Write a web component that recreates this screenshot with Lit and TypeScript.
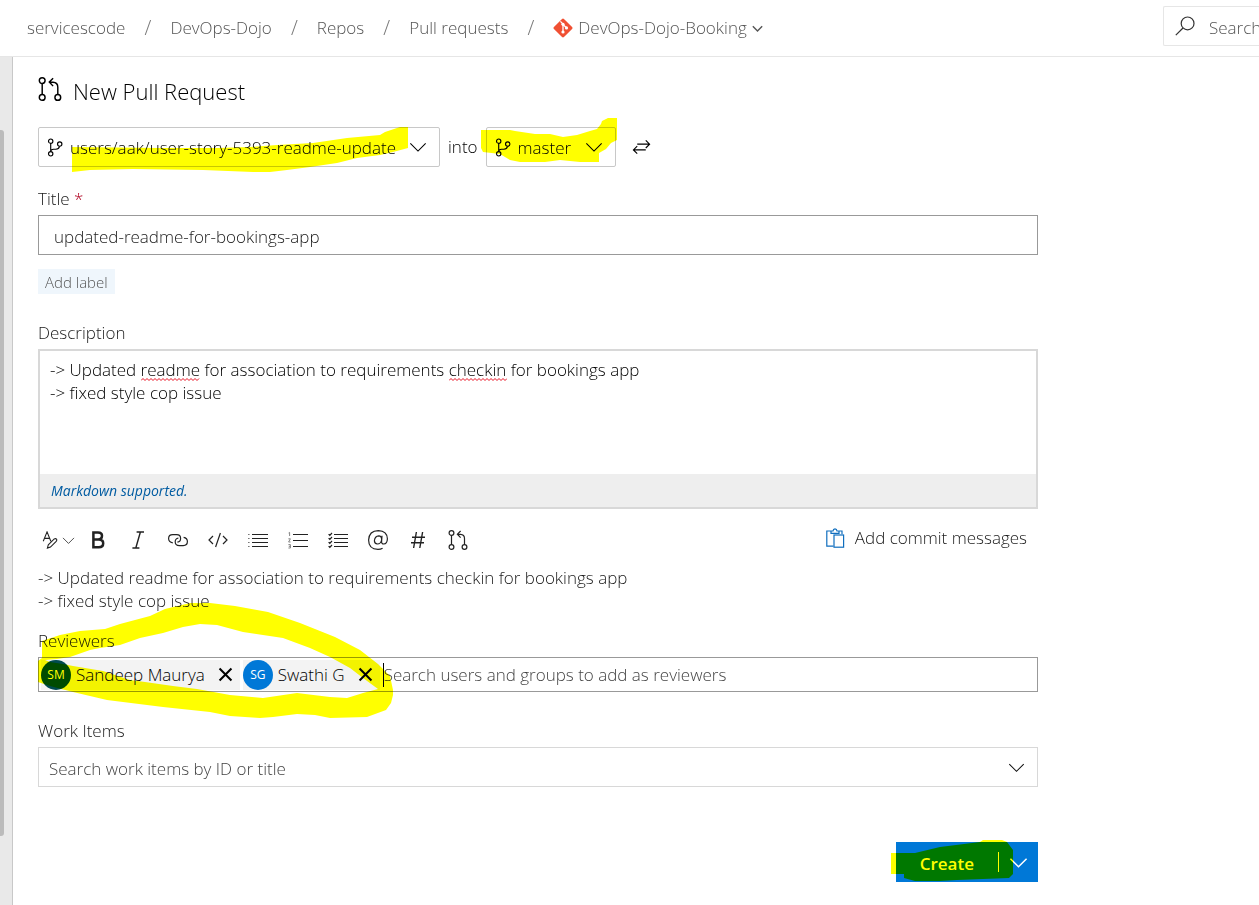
import { LitElement, html, css, svg } from "lit";
import { customElement, property, state, query } from "lit/decorators.js";

const icon = (size: number, body: unknown, cls = "") =>
  html`<svg class="icon ${cls}" width=${size} height=${size} viewBox="0 0 20 20" aria-hidden="true">${body}</svg>`;

const pullRequest = svg`
  <circle cx="3.5" cy="3" r="2.4"/><circle cx="3.5" cy="17" r="2.4"/><circle cx="16.5" cy="17" r="2.4"/>
  <path d="M3.5 5.4V14.6M16.5 14.6V8.5Q16.5 4.5 12.5 4.3L9.5 4.2M12.6 1L9.4 4.2L12.6 7.6"/>`;
const branch = svg`
  <circle cx="6" cy="3.3" r="2.3"/><circle cx="6" cy="16.7" r="2.3"/><circle cx="15.5" cy="6.4" r="2.3"/>
  <path d="M6 5.6V14.4M15.3 8.8Q14.6 11.8 11.4 11.8H9Q6 11.8 6 14.4"/>`;
const chevron = svg`<path d="M1.5 6L10 14.5L18.5 6"/>`;
const swap = svg`<path d="M5.5 6.5H18.5M14.5 2.5L18.5 6.5L14.5 10.5M14.5 12.5H1.5M5.5 8.5L1.5 12.5L5.5 16.5"/>`;
const search = svg`<circle cx="12.6" cy="7.4" r="6.4"/><path d="M8 12L.8 19.2"/>`;
const cross = svg`<path d="M3 3L17 17M17 3L3 17"/>`;
const clipboard = svg`
  <path d="M6 3H1.8V18.2H8.5M13.8 3H17V6.2M6 5.4V3H8Q8.2 .9 10 .9Q11.8 .9 12 3H14V5.4Z"/>
  <rect x="9" y="7" width="9.6" height="12.2"/>`;
const gitLogo = svg`
  <rect x="2.9" y="2.9" width="14.2" height="14.2" rx="1.4" transform="rotate(45 10 10)" fill="#f05033" stroke="none"/>
  <path d="M7.4 3.4L10 6V14M10.2 6.6L13.4 9.8" stroke="#fff" stroke-width="1.3"/>
  <g fill="#fff" stroke="none"><circle cx="10" cy="6.3" r="1.6"/><circle cx="10" cy="14" r="1.6"/><circle cx="13.5" cy="9.9" r="1.6"/></g>`;

const tools: { name: string; body: unknown }[] = [
  { name: "Bold", body: svg`<path stroke-width="2.5" d="M5.4 2.4H10Q14 2.4 14 5.8Q14 9.4 10 9.4H5.4ZM5.4 9.4H10.8Q15.2 9.4 15.2 13.2Q15.2 17.2 10.8 17.2H5.4Z"/>` },
  { name: "Italic", body: svg`<path stroke-width="1.4" d="M8.6 2H16M4.4 18H11.4M12.4 2L7.8 18"/>` },
  { name: "Link", body: svg`<path d="M4.8 12.8Q.6 12 .6 8.4Q.6 4.6 4.8 4.6H8.6Q12.6 4.6 12.6 8.4Q12.6 11.6 9.4 12.2M15.6 7.4Q19.4 8 19.4 11.6Q19.4 15.6 15.2 15.6H11.4Q7.2 15.6 7.2 11.8Q7.2 8.6 10.4 8"/>` },
  { name: "Code", body: svg`<path d="M5 6L1 10L5 14M15 6L19 10L15 14M12.4 3L7.6 17"/>` },
  { name: "Bulleted list", body: svg`<path d="M4 4.5H20M4 8.5H20M4 12.5H20M4 16.5H20"/><path stroke="#777" d="M0 4.5H1.6M0 8.5H1.6M0 12.5H1.6M0 16.5H1.6"/>` },
  { name: "Numbered list", body: svg`<path d="M5 4.5H20M5 10.5H20M5 16.5H20"/><path stroke="#777" stroke-width=".9" d="M.6 3L1.6 2.4V6M.4 8.8H2.4L.6 12H2.6M.4 14.6H2.4V18H.4M.8 16.3H2.4"/>` },
  { name: "Task list", body: svg`<path d="M6 4.5H20M6 8.5H20M6 12.5H20M6 16.5H20"/><path d="M.6 4.2L1.8 5.4L4 3M.6 8.2L1.8 9.4L4 7M.6 12.2L1.8 13.4L4 11M.6 16.2L1.8 17.4L4 15"/>` },
  { name: "Mention", body: svg`<path d="M14.6 18.2Q12.6 19.4 10 19.4Q.6 19.2 .6 10Q1 .8 10.4 .6Q19.2 1 19.4 8.8Q19.2 14 15.8 14Q13.4 14 13.6 11.4L14 5.8M13.6 10Q12.8 14 9.4 14Q6.4 13.8 6.4 10.8Q6.8 6 10.8 5.8Q13.8 6 13.6 10"/>` },
  { name: "Work item", body: svg`<path stroke-width="1.4" d="M8.4 2L5.6 18M14.6 2L11.8 18M4 7.2H17M3 12.8H16"/>` },
  { name: "Pull request", body: pullRequest },
];

const shared = css`
  * { box-sizing: border-box; }
  button, input, select, textarea { font: inherit; color: inherit; border: 0; margin: 0; padding: 0; background: none; border-radius: 0; outline: none; }
  button { cursor: pointer; }
  .icon { display: block; flex: none; fill: none; stroke: currentColor; stroke-width: 1.2; }
  .marker { position: absolute; mix-blend-mode: multiply; pointer-events: none; overflow: visible; fill: #ff0; }
`;

@customElement("branch-picker")
class BranchPicker extends LitElement {
  @property() branch = "";
  @property() label = "";
  static styles = [shared, css`
    :host { display: grid; align-items: center; height: 40px; border: 1px solid #c8c8c8; border-radius: 2px; color: #000; }
    :host > * { grid-area: 1 / 1; }
    .select { appearance: none; height: 38px; padding: 2px 43px 0 31px; cursor: pointer; }
    .branch { margin-left: 6px; }
    .chevron { justify-self: end; margin-right: 12px; pointer-events: none; }
  `];
  render() {
    return html`
      <select class="select" aria-label=${this.label}><option>${this.branch}</option></select>
      ${icon(19, branch, "branch")}${icon(18, chevron, "chevron")}`;
  }
}

@customElement("reviewer-chip")
class ReviewerChip extends LitElement {
  @property() name = "";
  @property() initials = "";
  @property() color = "";
  static styles = [shared, css`
    :host { display: flex; align-items: center; height: 30px; background: #f3f3f3; color: #000; }
    .avatar { width: 30px; height: 30px; margin-right: 5px; border-radius: 50%; color: #fff; font-size: 12px; font-weight: 400; line-height: 30px; text-align: center; }
    .remove { padding: 0 6px 0 12px; }
    .remove .icon { stroke-width: 2.4; }
  `];
  render() {
    return html`
      <span class="avatar" style="background:${this.color}">${this.initials}</span>
      <span>${this.name}</span>
      <button class="remove" aria-label="Remove ${this.name}">${icon(17, cross)}</button>`;
  }
}

interface Typo { left: number; top: number; width: number }

@customElement("app-root")
class AppRoot extends LitElement {
  @state() private description =
    "-> Updated readme for association to requirements checkin for bookings app\n-> fixed style cop issue";
  @state() private typos: Typo[] = [];
  @query("textarea") private area!: HTMLTextAreaElement;

  static styles = [shared, css`
    :host { display: flex; flex-direction: column; min-height: 100vh; overflow: hidden; background: #fff; color: #1a1a1a; font: 300 17px/24px "Open Sans", "Noto Sans", sans-serif; }
    .header { display: flex; align-items: center; justify-content: space-between; height: 57px; padding-left: 27px; border-bottom: 1px solid #e6e6e6; color: #555; overflow: hidden; }
    .crumbs { display: flex; align-items: center; white-space: nowrap; }
    .crumbs a { color: inherit; text-decoration: none; }
    .slash { width: 45px; text-align: center; color: #777; font-size: 20px; }
    .repo { display: flex; align-items: center; gap: 5px; }
    .repo .chevron { stroke-width: 2.6; }
    .search { display: flex; align-items: center; gap: 14px; flex: none; width: 96px; height: 40px; margin-bottom: 4px; padding-left: 11px; border: 1px solid #e6e6e6; border-right: 0; border-radius: 2px 0 0 2px; }
    .search .icon { color: #333; }
    .search input { min-width: 0; flex: 1; padding-top: 3px; }
    .search input::placeholder { color: #555; opacity: 1; }

    .body { display: flex; flex: 1; }
    .rail { flex: none; display: flex; width: 13px; padding: 73px 0 69px; background: #e9e9e9; border-right: 1px solid #c8c8c8; }
    .thumb { width: 4px; background: #bbb; border-radius: 0 3px 3px 0; }
    .main { flex: 1; min-width: 0; padding: 19px 25px 23px; }
    .form { max-width: 1000px; }

    .heading { display: flex; align-items: center; gap: 11px; margin: 0 0 21px; font-size: 22px; line-height: 30px; font-weight: inherit; color: #000; }
    .heading .icon { margin-bottom: 4px; }
    .branches { display: flex; align-items: center; gap: 8px; color: #000; }
    .spot { position: relative; display: flex; }
    .swap { margin-left: 8px; }
    .label { display: block; margin: 20px 0 4px; }
    .required { color: #b00020; }
    .title { display: block; width: 100%; height: 40px; padding: 2px 15px 0; border: 1px solid #999; }
    .tag { display: block; height: 25px; margin-top: 14px; padding: 0 7px; background: #eff6fc; color: #555; font-size: 15px; }
    .label.wide { margin-top: 27px; }

    .editor { border: 2px solid #d8d8d8; }
    .writing { position: relative; }
    .writing textarea { display: block; width: 100%; height: 123px; padding: 7px 10px; line-height: 23px; color: #000; resize: none; overflow: hidden; }
    .typo { position: absolute; height: 3px; pointer-events: none; fill: none; stroke: #e81123; }
    .hint { height: 33px; padding-left: 11px; background: #eee; color: #005ba1; font-size: 14px; font-weight: 400; line-height: 33px; font-style: italic; }
    .hint a { color: inherit; text-decoration: none; }

    .tools { display: flex; align-items: center; height: 40px; margin-top: 11px; color: #222; }
    .tool { display: grid; place-items: center; width: 40px; height: 40px; }
    .style { display: flex; align-items: center; gap: 2px; width: 40px; padding-left: 4px; }
    .commit { display: flex; align-items: center; gap: 10px; margin: 0 11px 4px auto; color: #1a1a1a; }
    .commit .icon { color: #106ebe; }
    .preview { margin: 6px 0 0; line-height: 23px; white-space: pre-wrap; }
    .label.near { margin-top: 17px; }

    .reviewers { position: relative; }
    .people { display: flex; align-items: center; gap: 3px; height: 35px; padding: 0 2px; border: 1px solid #999; }
    .people input { flex: 1; min-width: 0; height: 24px; border-left: 1px solid #000; }
    .people input::placeholder, .items input::placeholder { color: #444; opacity: 1; }
    .items { display: flex; align-items: center; height: 40px; padding: 0 12px 0 10px; border: 1px solid #d8d8d8; color: #111; }
    .items input { flex: 1; min-width: 0; padding-top: 3px; }

    .actions { display: flex; justify-content: flex-end; margin-top: 55px; }
    .split { position: relative; display: flex; align-items: center; height: 40px; background: #0078d7; color: #fff; }
    .create { height: 40px; padding: 3px 24px 0; font-weight: 600; }
    .more { display: grid; place-items: center; width: 40px; height: 20px; border-left: 1px solid #fff; }
    .more .icon { stroke-width: 1.6; }
    .m-source { left: 34px; top: 0; }
    .m-target { left: -5px; top: -9px; }
    .m-people { left: 0; top: -54px; }
    .m-create { left: -5px; top: -2px; }
  `];

  firstUpdated() {
    this.markTypos();
  }

  private typed(e: Event) {
    this.description = (e.target as HTMLTextAreaElement).value;
    this.markTypos();
  }

  private markTypos() {
    const s = getComputedStyle(this.area);
    const ctx = document.createElement("canvas").getContext("2d")!;
    ctx.font = `${s.fontWeight} ${s.fontSize} ${s.fontFamily}`;
    const width = (t: string) => Math.round(ctx.measureText(t).width);
    this.typos = this.description.split("\n").flatMap((line, row) =>
      [...line.matchAll(/readme|checkin/g)].map((m) => ({
        left: parseInt(s.paddingLeft) + width(line.slice(0, m.index)),
        top: parseInt(s.paddingTop) + row * parseInt(s.lineHeight) + 20,
        width: width(m[0]),
      })));
  }

  private squiggle(t: Typo) {
    let d = "M0 2.5";
    for (let x = 2; x <= t.width; x += 2) d += `L${x} ${x % 4 ? 0.5 : 2.5}`;
    return html`<svg class="typo" style="left:${t.left}px;top:${t.top}px;width:${t.width}px" aria-hidden="true"><path d=${d}/></svg>`;
  }

  render() {
    const crumbs = ["servicescode", "DevOps-Dojo", "Repos", "Pull requests"];
    return html`
      <header class="header">
        <nav class="crumbs" aria-label="Breadcrumb">
          ${crumbs.map((c) => html`<a href="#">${c}</a><span class="slash">/</span>`)}
          <a class="repo" href="#">${icon(20, gitLogo)}<span>DevOps-Dojo-Booking</span>${icon(11, chevron, "chevron")}</a>
        </nav>
        <label class="search">${icon(20, search)}<input type="text" placeholder="Search" aria-label="Search" /></label>
      </header>
      <div class="body">
        <div class="rail"><div class="thumb"></div></div>
        <main class="main"><div class="form">
          <h1 class="heading">${icon(24, pullRequest)}New Pull Request</h1>
          <div class="branches">
            <div class="spot">
              <branch-picker label="Source branch" branch="users/aak/user-story-5393-readme-update"></branch-picker>
              <svg class="marker m-source" width="336" height="45" viewBox="72 127 336 45" aria-hidden="true">
                <path d="M72 147L160 148H217L250 147L277 145L313 143L347 138L380 135L385 132L400 127H408V148L393 152L380 155L357 158L337 163L310 167L287 170L270 172H253L203 170L133 169L90 170L72 172Z"/>
              </svg>
            </div>
            <span>into</span>
            <div class="spot">
              <branch-picker label="Target branch" branch="master"></branch-picker>
              <svg class="marker m-target" width="136" height="44" viewBox="481 118 136 44" aria-hidden="true">
                <path d="M481 130H510L515 131L535 134H550L563 137L577 135L590 131L597 129L601 124L602 121L608 118H617V140L611 143L606 149L599 153V162H580L560 160L545 162H520L510 160L500 154L483 152L481 148Z"/>
              </svg>
            </div>
            <button class="swap" aria-label="Swap branches">${icon(19, swap)}</button>
          </div>

          <label class="label" for="title">Title <span class="required">*</span></label>
          <input class="title" id="title" type="text" value="updated-readme-for-bookings-app" />
          <button class="tag">Add label</button>

          <label class="label wide" for="description">Description</label>
          <div class="editor">
            <div class="writing">
              <textarea id="description" spellcheck="false" .value=${this.description} @input=${this.typed}></textarea>
              ${this.typos.map((t) => this.squiggle(t))}
            </div>
            <div class="hint"><a href="#">Markdown supported.</a></div>
          </div>

          <div class="tools">
            <button class="style" aria-label="Text style">
              ${icon(18, svg`<path d="M1.4 11.4L5.6 1L9.8 11.4M3 8.2H8.4M6 19L7 15.4L13.6 8.8Q15.4 8 16.2 9.2Q16.8 10.4 15.8 11.4L9.4 17.8Z"/>`)}
              ${icon(13, chevron)}
            </button>
            ${tools.map((t) => html`<button class="tool" aria-label=${t.name}>${icon(20, t.body)}</button>`)}
            <button class="commit">${icon(20, clipboard)}Add commit messages</button>
          </div>
          <p class="preview">${this.description}</p>

          <label class="label near" for="reviewers">Reviewers</label>
          <div class="reviewers">
            <div class="people">
              <reviewer-chip name="Sandeep Maurya" initials="SM" color="#004b50"></reviewer-chip>
              <reviewer-chip name="Swathi G" initials="SG" color="#0078d7"></reviewer-chip>
              <input id="reviewers" type="text" placeholder="Search users and groups to add as reviewers" />
            </div>
            <svg class="marker m-people" width="355" height="116" viewBox="38 603 355 116" aria-hidden="true">
              <path fill-rule="evenodd" d="M42 641L60 635L80 631L105 629L120 624L150 616L165 609L190 603H210L235 606L268 612L300 623L335 637L360 650L378 664L390 676L393 690V695L391 703L386 710L367 717L330 718L315 715L297 714L273 717L260 718L230 716L210 712L163 707L107 700L73 692L50 686L38 682V661L42 658ZM45 660L57 659L70 657L90 650L100 648L120 645L140 638L163 633L183 627L200 624L217 625L243 632L283 638L310 648L330 657L350 668L363 678L378 689L363 693L347 698L330 697L297 693L263 698L230 695L197 689L173 686L145 682L130 680L103 671L73 666L63 664L50 662Z"/>
            </svg>
          </div>

          <label class="label wide" for="items">Work Items</label>
          <div class="items">
            <input id="items" type="text" placeholder="Search work items by ID or title" />
            <button aria-label="Show work items">${icon(17, chevron)}</button>
          </div>

          <div class="actions">
            <div class="split">
              <button class="create">Create</button>
              <button class="more" aria-label="More create options">${icon(19, chevron)}</button>
              <svg class="marker m-create" width="122" height="42" viewBox="891 840 122 42" aria-hidden="true">
                <path d="M891 853H915L940 847L980 842L983 840H1002L1007 842L1013 850V874L1009 878L957 880L940 881H915L904 878V874H891Z"/>
              </svg>
            </div>
          </div>
        </div></main>
      </div>`;
  }
}
